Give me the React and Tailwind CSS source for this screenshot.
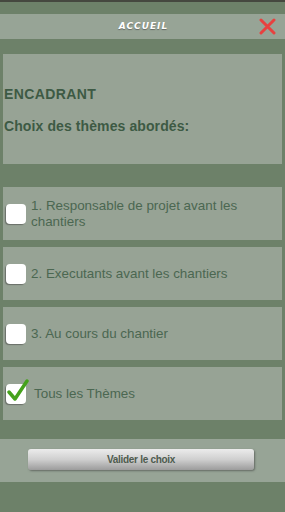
import React from 'react';

const themes = [
  { label: '1. Responsable de projet avant les chantiers', checked: false },
  { label: '2. Executants avant les chantiers', checked: false },
  { label: '3. Au cours du chantier', checked: false },
  { label: 'Tous les Thèmes', checked: true },
];

const CheckBox = ({ checked }) => (
  <div className="relative w-[20px] h-[20px] shrink-0">
    <div className="w-[20px] h-[20px] rounded-[4px] bg-white shadow-[-1px_1px_1px_rgba(60,60,60,0.5)]" />
    {checked && (
      <svg className="absolute left-[1px] top-[-5px]" width="22" height="23" viewBox="0 0 22 23">
        <path d="M2 13 L8 20 L20 2" fill="none" stroke="#45a21c" strokeWidth="3.5" strokeLinecap="round" strokeLinejoin="round" />
      </svg>
    )}
  </div>
);

const App = () => {
  return (
    <div className="w-[285px] h-[512px] bg-[#6d8169] flex flex-col overflow-hidden" style={{ fontFamily: '"Liberation Sans", Arial, sans-serif' }}>
      <div className="h-[2px] bg-[#45483f]" />
      <div className="h-[12px]" />

      <div className="h-[25px] bg-[#97a496] relative flex items-center justify-center">
        <span className="text-white font-bold italic text-[9px] tracking-[1px] ml-[2px] [text-shadow:0_1px_1px_rgba(80,80,80,0.7)]" style={{ fontFamily: '"DejaVu Sans", sans-serif' }}>
          ACCUEIL
        </span>
        <svg className="absolute left-[259px] top-[4px]" width="17" height="17" viewBox="0 0 17 17">
          <path d="M2 2 L15 15 M15 2 L2 15" stroke="#e8413f" strokeWidth="3" strokeLinecap="round" />
        </svg>
      </div>

      <div className="mt-[15px] mx-[3px] h-[110px] bg-[#97a395] pt-[32px] px-[1px] text-[#3d5a44] font-bold text-[14px]">
        <div className="leading-[16px] tracking-[0.4px]">ENCADRANT</div>
        <div className="leading-[16px] mt-[16px] tracking-[0.1px]">Choix des thèmes abordés:</div>
      </div>

      <div className="mt-[23px] flex flex-col gap-[7px]">
        {themes.map((t, i) => (
          <div key={i} className="mx-[3px] h-[53px] bg-[#97a395] flex items-center pl-[3px] pr-[8px]">
            <CheckBox checked={t.checked} />
            <span className={`text-[13.4px] leading-[16px] text-[#4b6751] ${t.checked ? 'ml-[8px]' : 'ml-[5px]'}`}>
              {t.label}
            </span>
          </div>
        ))}
      </div>

      <div className="mt-[19px] h-[43px] bg-[#97a496] pt-[10px] px-[28px]">
        <button className="w-[226px] h-[21px] rounded-[3px] bg-gradient-to-b from-[#ececec] via-[#cfcfcf] to-[#9c9c9c] shadow-[1px_1px_2px_rgba(50,50,50,0.5)] text-[10px] font-bold text-[#4e5b4e] tracking-[-0.3px] flex items-center justify-center">
          Valider le choix
        </button>
      </div>
    </div>
  );
};

export default App;
